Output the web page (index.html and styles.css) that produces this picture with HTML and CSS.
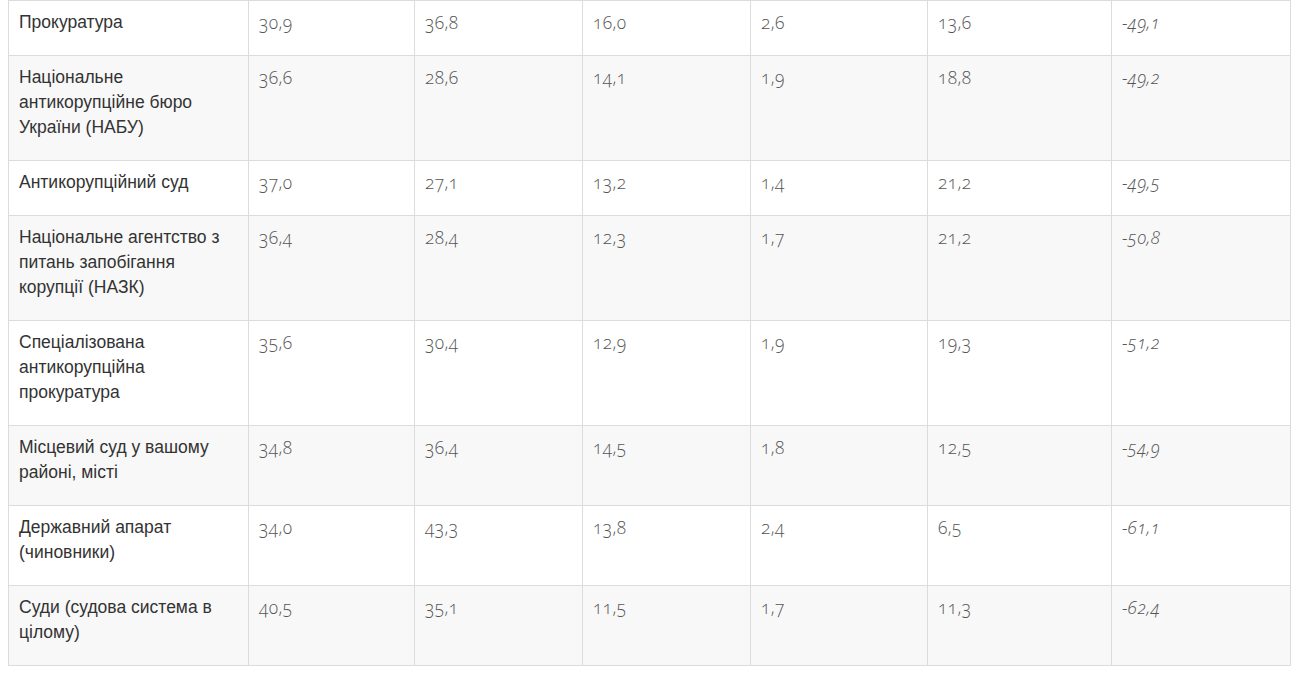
FILE: index.html
```html
<!DOCTYPE html>
<html lang="uk">
<head>
<meta charset="utf-8">
<link rel="stylesheet" href="styles.css">
</head>
<body>
<div class="wrap">
<table class="data">
<colgroup>
<col class="c1"><col class="c2"><col class="c3"><col class="c4"><col class="c5"><col class="c6"><col class="c7">
</colgroup>
<tbody>
<tr><td class="name">Прокуратура</td><td>30,9</td><td>36,8</td><td>16,0</td><td>2,6</td><td>13,6</td><td class="bal">-49,1</td></tr>
<tr><td class="name">Національне антикорупційне бюро України (НАБУ)</td><td>36,6</td><td>28,6</td><td>14,1</td><td>1,9</td><td>18,8</td><td class="bal">-49,2</td></tr>
<tr><td class="name">Антикорупційний суд</td><td>37,0</td><td>27,1</td><td>13,2</td><td>1,4</td><td>21,2</td><td class="bal">-49,5</td></tr>
<tr><td class="name">Національне агентство з питань запобігання корупції (НАЗК)</td><td>36,4</td><td>28,4</td><td>12,3</td><td>1,7</td><td>21,2</td><td class="bal">-50,8</td></tr>
<tr><td class="name">Спеціалізована антикорупційна прокуратура</td><td>35,6</td><td>30,4</td><td>12,9</td><td>1,9</td><td>19,3</td><td class="bal">-51,2</td></tr>
<tr><td class="name">Місцевий суд у вашому районі, місті</td><td>34,8</td><td>36,4</td><td>14,5</td><td>1,8</td><td>12,5</td><td class="bal">-54,9</td></tr>
<tr><td class="name">Державний апарат (чиновники)</td><td>34,0</td><td>43,3</td><td>13,8</td><td>2,4</td><td>6,5</td><td class="bal">-61,1</td></tr>
<tr><td class="name">Суди (судова система в цілому)</td><td>40,5</td><td>35,1</td><td>11,5</td><td>1,7</td><td>11,3</td><td class="bal">-62,4</td></tr>
</tbody>
</table>
</div>
</body>
</html>
```

FILE: styles.css
```css
html, body {
  margin: 0;
  padding: 0;
  background: #fff;
}
.wrap {
  padding: 0 8px;
}
.data {
  border-collapse: collapse;
  table-layout: fixed;
  width: 1282px;
  font-family: "Open Sans", "Lato", sans-serif;
  font-weight: 300;
  font-size: 17.5px;
  letter-spacing: 0.4px;
  color: #555;
}
.c1 { width: 240px; }
.c2 { width: 166px; }
.c3 { width: 168px; }
.c4 { width: 168px; }
.c5 { width: 177px; }
.c6 { width: 184px; }
.c7 { width: 179px; }
.data td {
  border: 1px solid #dcdcdc;
  padding: 9px 10px 20px 10px;
  line-height: 25px;
  vertical-align: top;
  font-variant-numeric: oldstyle-nums;
}
.data tr:nth-child(even) td {
  background: #f8f8f8;
}
.data td.name {
  font-family: "Liberation Sans", Arial, sans-serif;
  font-weight: 400;
  letter-spacing: 0;
  color: #333;
  font-size: 17.5px;
}
.data td.bal {
  font-style: italic;
}
```
